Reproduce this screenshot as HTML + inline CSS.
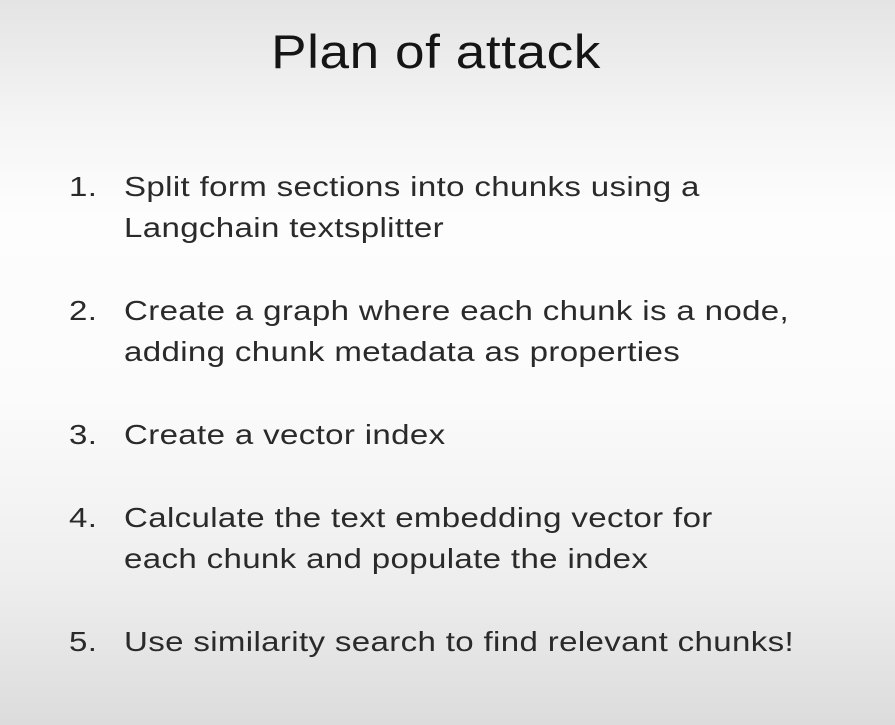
<!DOCTYPE html>
<html><head><meta charset="utf-8"><style>
html,body{margin:0;padding:0}
body{width:895px;height:725px;overflow:hidden;position:relative;
background:linear-gradient(to bottom,#e4e4e4 0%,#f6f6f6 18%,#fdfdfd 30%,#fbfbfb 55%,#eeeeee 80%,#dcdcdc 100%);
font-family:"Liberation Sans",sans-serif;color:#2a2a2a}
.t{position:absolute;left:0;width:872px;text-align:center;top:22px;font-size:47px;line-height:60px;color:#151515;letter-spacing:0.5px;transform:scaleX(1.13);transform-origin:436px 0}
.l{position:absolute;font-size:28px;line-height:40px;height:40px;white-space:nowrap;letter-spacing:0.3px;transform:scaleX(1.18);transform-origin:0 0}
.n{left:69px}.x{left:124px}
</style></head><body>
<div class="t">Plan of attack</div>
<div class="l n" style="top:167px">1.</div>
<div class="l x" style="top:167px">Split form sections into chunks using a</div>
<div class="l x" style="top:208px">Langchain textsplitter</div>
<div class="l n" style="top:291px">2.</div>
<div class="l x" style="top:291px">Create a graph where each chunk is a node,</div>
<div class="l x" style="top:332px">adding chunk metadata as properties</div>
<div class="l n" style="top:415px">3.</div>
<div class="l x" style="top:415px">Create a vector index</div>
<div class="l n" style="top:498px">4.</div>
<div class="l x" style="top:498px">Calculate the text embedding vector for</div>
<div class="l x" style="top:539px">each chunk and populate the index</div>
<div class="l n" style="top:622px">5.</div>
<div class="l x" style="top:622px">Use similarity search to find relevant chunks!</div>
</body></html>
